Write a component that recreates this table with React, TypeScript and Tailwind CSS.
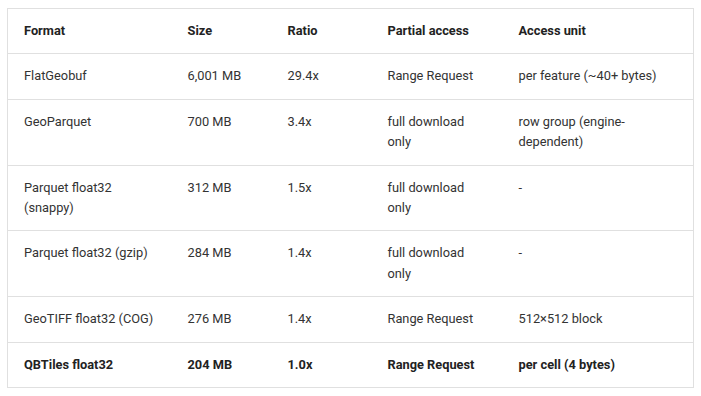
const rows = [
  ["FlatGeobuf", "6,001 MB", "29.4x", "Range Request", "per feature (~40+ bytes)"],
  ["GeoParquet", "700 MB", "3.4x", "full download only", "row group (engine-dependent)"],
  ["Parquet float32 (snappy)", "312 MB", "1.5x", "full download only", "-"],
  ["Parquet float32 (gzip)", "284 MB", "1.4x", "full download only", "-"],
  ["GeoTIFF float32 (COG)", "276 MB", "1.4x", "Range Request", "512×512 block"],
]

const last = ["QBTiles float32", "204 MB", "1.0x", "Range Request", "per cell (4 bytes)"]

export default function App() {
  return (
    <div className="min-h-screen bg-white px-[7px] pt-[8px] font-['Roboto',sans-serif] text-[12.8px] leading-[20.4px] text-[#333]">
      <table className="w-full table-fixed border-collapse border border-[#e0e0e0]">
        <colgroup>
          <col className="w-[164px]" />
          <col className="w-[100px]" />
          <col className="w-[100px]" />
          <col className="w-[131px]" />
          <col />
        </colgroup>
        <thead>
          <tr className="border-b border-[#e0e0e0]">
            {["Format", "Size", "Ratio", "Partial access", "Access unit"].map((h) => (
              <th key={h} className="px-4 py-3 text-left align-top font-bold text-[#222]">
                {h}
              </th>
            ))}
          </tr>
        </thead>
        <tbody>
          {rows.map((r) => (
            <tr key={r[0]} className="border-b border-[#e0e0e0]">
              {r.map((c, i) => (
                <td key={i} className="px-4 py-3 align-top">
                  {c}
                </td>
              ))}
            </tr>
          ))}
          <tr>
            {last.map((c, i) => (
              <td key={i} className="px-4 py-3 align-top font-bold text-[#222]">
                {c}
              </td>
            ))}
          </tr>
        </tbody>
      </table>
    </div>
  )
}
